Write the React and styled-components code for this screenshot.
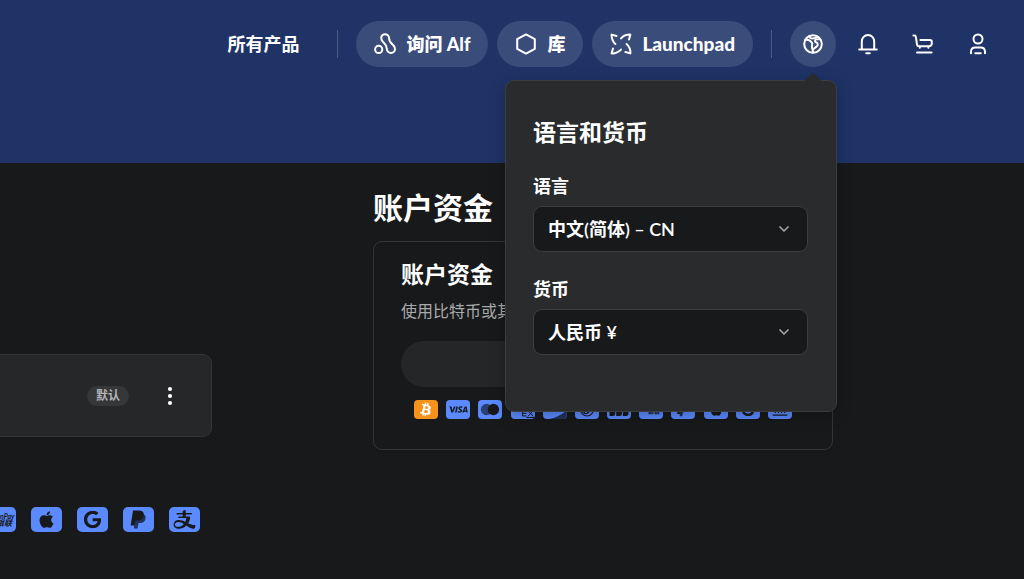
import React, { useState } from "react";
import styled, { createGlobalStyle } from "styled-components";
import { FaApple, FaBtc, FaGoogle } from "react-icons/fa";
import { AiOutlineAlipay } from "react-icons/ai";
import { SiVisa } from "react-icons/si";

const GlobalStyle = createGlobalStyle`
  * {
    box-sizing: border-box;
  }

  body {
    margin: 0;
    background-color: #18191b;
    color: #fff;
    font-family: Lato, "Noto Sans CJK SC", sans-serif;
    overflow: hidden;
  }

  button,
  select {
    font-family: inherit;
    color: inherit;
  }

  button {
    border: none;
    cursor: pointer;
  }

  h1,
  h2,
  p {
    margin: 0;
  }
`;

const Hero = styled.header`
  height: 163px;
  padding: 21px 23px 0 0;
  background-color: #1f3366;
`;

const Nav = styled.nav`
  display: flex;
  align-items: center;
  justify-content: flex-end;
`;

const NavLink = styled.a`
  color: #fff;
  font-size: 18px;
  font-weight: 700;
  line-height: 24px;
  text-decoration: none;
`;

const Divider = styled.span`
  width: 1px;
  height: 28px;
  margin: 0 18px 0 ${(props) => (props.$wide ? "38px" : "18px")};
  background-color: #4a5b85;
`;

const NavGroup = styled.div`
  display: flex;
  gap: 9px;
`;

const Pill = styled.button`
  display: flex;
  align-items: center;
  gap: 10px;
  height: 46px;
  padding: 0 18px;
  border-radius: 23px;
  background-color: #3a4c79;
  font-size: ${(props) => (props.$latin ? "19px" : "18px")};
  font-weight: 900;
  line-height: 24px;
`;

const IconButton = styled.button`
  display: flex;
  align-items: center;
  justify-content: center;
  width: 46px;
  height: 46px;
  padding: 0;
  border-radius: 50%;
  background-color: ${(props) => (props.$active ? "#3a4c79" : "transparent")};
`;

const PopoverAnchor = styled.div`
  position: relative;
`;

const Popover = styled.section`
  position: absolute;
  top: 59px;
  right: -1px;
  z-index: 2;
  width: 332px;
  padding: 34px 28px 56px 27px;
  border: 1px solid #3b3d3f;
  border-radius: 9px;
  background-color: #292b2d;
  box-shadow: 0 4px 16px rgba(0, 0, 0, 0.25);

  &::before {
    content: "";
    position: absolute;
    top: -6px;
    right: 17px;
    width: 12px;
    height: 12px;
    border-radius: 2px 0 0 0;
    background-color: #292b2d;
    transform: rotate(45deg);
  }
`;

const PopoverTitle = styled.h2`
  font-size: 23px;
  line-height: 34px;
`;

const Field = styled.div`
  margin-top: 24px;
`;

const FieldLabel = styled.label`
  display: block;
  margin-bottom: 7px;
  font-size: 18px;
  font-weight: 600;
  line-height: 26px;
`;

const SelectBox = styled.div`
  display: grid;
  align-items: center;

  > * {
    grid-area: 1 / 1;
  }

  svg {
    justify-self: end;
    margin-right: 18px;
    pointer-events: none;
  }
`;

const Select = styled.select`
  appearance: none;
  width: 100%;
  height: 46px;
  padding: 0 40px 0 14px;
  border: 1px solid #3b3d3f;
  border-radius: 9px;
  background-color: #18191b;
  font-size: 18px;
  font-weight: 600;
`;

const Main = styled.main`
  display: grid;
  grid-template-columns: minmax(0, 1fr) 460px;
  column-gap: 161px;
  padding-right: 191px;
`;

const Methods = styled.section`
  padding-top: 191px;
  overflow: hidden;
`;

const MethodCard = styled.div`
  display: flex;
  align-items: center;
  justify-content: flex-end;
  gap: 29px;
  height: 83px;
  padding-right: 29px;
  border: 1px solid #333537;
  border-left: none;
  border-radius: 0 9px 9px 0;
  background-color: #252729;
`;

const Badge = styled.span`
  padding: 0 9px;
  border-radius: 10px;
  background-color: #353739;
  color: #b4b5b6;
  font-size: 12px;
  font-weight: 600;
  line-height: 20px;
`;

const MenuButton = styled.button`
  display: flex;
  padding: 0;
  background: none;
`;

const BrandRow = styled.div`
  display: flex;
  justify-content: flex-end;
  gap: 15px;
  padding: 70px 12px 0 0;
`;

const FundsBrands = styled.div`
  display: flex;
  justify-content: space-between;
  padding: 13px 13px 0;
`;

const Tile = styled.svg`
  display: block;
  flex: none;
  width: ${(props) => (props.$small ? "24px" : "31px")};
  height: ${(props) => (props.$small ? "19px" : "25px")};
  border-radius: ${(props) => (props.$small ? "4px" : "5px")};
  background-color: ${(props) => props.$bg || "#5b8aff"};
  color: #18191b;
`;

const Funds = styled.section`
  padding-top: 22px;
`;

const FundsTitle = styled.h1`
  font-size: 30px;
  line-height: 44px;
`;

const FundsCard = styled.div`
  margin-top: 12px;
  padding: 15px 27px 30px;
  border: 1px solid #333537;
  border-radius: 9px;
`;

const CardTitle = styled.h2`
  font-size: 23px;
  line-height: 34px;
`;

const CardText = styled.p`
  margin-top: 8px;
  color: #a9aaab;
  font-size: 16px;
  line-height: 24px;
`;

const FundsButton = styled.button`
  display: block;
  width: 100%;
  height: 46px;
  margin-top: 18px;
  border-radius: 23px;
  background-color: #242628;
`;

function LineIcon({ children, size = 22 }) {
  return (
    <svg
      width={size}
      height={size}
      viewBox={`0 0 ${size} ${size}`}
      fill="none"
      stroke="currentColor"
      strokeWidth="2"
      strokeLinecap="round"
      strokeLinejoin="round"
      aria-hidden="true"
    >
      {children}
    </svg>
  );
}

const AlfIcon = () => (
  <LineIcon>
    <circle cx="4.7" cy="16.4" r="3.6" />
    <path d="M7.2 5C7.2 2.8 8.9 1.2 11 1.2C13.1 1.2 14.9 2.8 15 4.8C15.1 8 15.7 9.3 18.4 11.4C20.2 12.8 21 14.2 21 16C21 18.300 19.200 20 17 20C14.800 20 13 18.300 12.900 16C12.800 13.200 12.300 12 10 10C8 8.300 7.200 6.900 7.200 5z" />
  </LineIcon>
);

const LibraryIcon = () => (
  <LineIcon>
    <path d="M11 1.4L19.8 6.1V15.9L11 20.6L2.2 15.9V6.1z" />
  </LineIcon>
);

const LaunchpadIcon = () => (
  <LineIcon>
    <path d="M6.6 3L1.6 1.6C1.4 6 2.8 8.6 5.4 11" />
    <path d="M19 6.6L20.4 1.6C16 1.4 13.4 2.8 11 5.4" />
    <path d="M15.4 19L20.4 20.4C20.6 16 19.2 13.4 16.6 11" />
    <path d="M3 15.4L1.6 20.4C6 20.6 8.6 19.2 11 16.6" />
  </LineIcon>
);

const GlobeIcon = () => (
  <LineIcon>
    <circle cx="11" cy="11" r="8.8" />
    <path d="M3.4 6.5C6.2 6.6 8.8 7.8 10 9.7C11 11.4 9.4 12.4 10 14.4L11.2 19.4" />
    <path d="M7 3.2L8.6 5C10.4 6.4 12.6 5.3 15.6 3.8" />
    <path d="M18 6.3H14.5C12.6 6.5 12.5 8.7 14 9.3C16.4 10 16.2 12.4 14.5 13.6L11 16.4" />
  </LineIcon>
);

const BellIcon = () => (
  <LineIcon>
    <path d="M4.8 16V8.4A6.2 6.4 0 0 1 17.2 8.4V16M2.2 16.4H19.8M9.2 20.2H12.8" />
  </LineIcon>
);

const CartIcon = () => (
  <LineIcon>
    <path d="M1.4 2.5H2.5Q3.6 2.5 3.8 3.6L5 11.4Q5.3 13.3 7 13.3H16.5Q19.6 13.3 19.8 10.5V8.8Q19.8 7 18 7H8.4" />
    <path d="M5 19.6H19.6M7.8 14.4V14.8M16.4 14.4V14.8" />
  </LineIcon>
);

const UserIcon = () => (
  <LineIcon>
    <circle cx="11" cy="6" r="4.5" />
    <path d="M4 20.2V18.6Q4.2 14.4 8.2 14.4H13.8Q17.8 14.4 18 18.6V20.2M8.2 20.2H13.8" />
  </LineIcon>
);

const Chevron = () => (
  <svg width="12" height="12" viewBox="0 0 12 12" fill="none" stroke="#a9aaab" strokeWidth="1.5" aria-hidden="true">
    <path d="M1.5 3.5L6 8L10.5 3.5" />
  </svg>
);

// Every logo is drawn on a 31x25 card
const brands = {
  bitcoin: (
    <g transform="rotate(13 15.5 12.5)" color="#fff">
      <FaBtc size={18} x="6.5" y="3.5" />
    </g>
  ),
  visa: <SiVisa size={26} x="2.5" y="-0.5" />,
  mastercard: (
    <>
      <circle cx="11" cy="12.5" r="7.5" fill="#2c3f72" />
      <circle cx="20" cy="12.5" r="7.5" fill="currentColor" />
    </>
  ),
  amex: (
    <g fill="none" stroke="currentColor" strokeWidth="1.3">
      <path d="M15 9H31M20 14H15V21H20M15 17.5H20M22 14L29 21.5M29 14L22 21.5" />
      <path d="M20 23H31" />
    </g>
  ),
  discover: <path d="M31 13C25 19 17 23 8 25H31z" fill="#233257" />,
  diners: (
    <g fill="none" stroke="currentColor" strokeWidth="1.5">
      <circle cx="15.5" cy="12.5" r="8.5" />
      <circle cx="14" cy="12.5" r="5.5" />
      <path d="M12 8V17M16 8V17" />
    </g>
  ),
  jcb: (
    <g fill="currentColor">
      <path d="M3 7Q3 4 6 4H10.5V18Q10.5 21 7.5 21H3z" />
      <path d="M11.8 7Q11.800 4 14.800 4H19.300V18Q19.300 21 16.300 21H11.800z" />
      <path d="M20.600 7Q20.600 4 23.600 4H28V18Q28 21 25 21H20.600z" />
    </g>
  ),
  unionpay: (
    <g fill="currentColor" fontWeight="700" fontStyle="italic">
      <text x="1" y="12" fontSize="7">UnionPay</text>
      <text x="11" y="19" fontSize="8">银联</text>
    </g>
  ),
  apple: <FaApple size={19} x="6" y="3" />,
  google: <FaGoogle size={18} x="6.5" y="3.5" />,
  paypal: (
    <>
      <path d="M12 7H19.5Q23.5 8 22.5 12Q21.5 16 17 16H15.5L14.5 21.5H11z" fill="#233257" />
      <path d="M10 3.5H16.5Q21.5 4 20.8 8.5Q20 13.5 14.5 13.5H12.5L11.5 18.5H7.7z" fill="currentColor" />
    </>
  ),
  alipay: <AiOutlineAlipay size={25} x="3" y="0" />,
  bank: (
    <g fill="none" stroke="currentColor" strokeWidth="1.6">
      <path d="M7 9L15.5 4L24 9zM9.5 11V17M13.5 11V17M17.5 11V17M21.5 11V17M6 20H25" />
    </g>
  ),
};

function BrandTile({ name, small }) {
  return (
    <Tile viewBox="0 0 31 25" $small={small} $bg={name === "bitcoin" ? "#f7931a" : undefined} role="img" aria-label={name}>
      {brands[name]}
    </Tile>
  );
}

const fundsBrands = [
  "bitcoin",
  "visa",
  "mastercard",
  "amex",
  "discover",
  "diners",
  "jcb",
  "unionpay",
  "paypal",
  "apple",
  "google",
  "bank",
];

const methodBrands = ["unionpay", "apple", "google", "paypal", "alipay"];

function LocalePopover() {
  const [language, setLanguage] = useState("zh-CN");
  const [currency, setCurrency] = useState("CNY");

  return (
    <Popover>
      <PopoverTitle>语言和货币</PopoverTitle>
      <Field>
        <FieldLabel htmlFor="language">语言</FieldLabel>
        <SelectBox>
          <Select id="language" value={language} onChange={(e) => setLanguage(e.target.value)}>
            <option value="zh-CN">中文(简体) – CN</option>
          </Select>
          <Chevron />
        </SelectBox>
      </Field>
      <Field>
        <FieldLabel htmlFor="currency">货币</FieldLabel>
        <SelectBox>
          <Select id="currency" value={currency} onChange={(e) => setCurrency(e.target.value)}>
            <option value="CNY">人民币 ¥</option>
          </Select>
          <Chevron />
        </SelectBox>
      </Field>
    </Popover>
  );
}

function App() {
  const [isOpen, setIsOpen] = useState(true);

  return (
    <>
      <GlobalStyle />
      <Hero>
        <Nav>
          <NavLink href="#products">所有产品</NavLink>
          <Divider $wide />
          <NavGroup>
            <Pill>
              <AlfIcon />
              询问 Alf
            </Pill>
            <Pill>
              <LibraryIcon />
              库
            </Pill>
            <Pill $latin>
              <LaunchpadIcon />
              Launchpad
            </Pill>
          </NavGroup>
          <Divider />
          <NavGroup>
            <PopoverAnchor>
              <IconButton $active={isOpen} aria-label="语言和货币" onClick={() => setIsOpen(!isOpen)}>
                <GlobeIcon />
              </IconButton>
              {isOpen && <LocalePopover />}
            </PopoverAnchor>
            <IconButton aria-label="通知">
              <BellIcon />
            </IconButton>
            <IconButton aria-label="购物车">
              <CartIcon />
            </IconButton>
            <IconButton aria-label="账户">
              <UserIcon />
            </IconButton>
          </NavGroup>
        </Nav>
      </Hero>
      <Main>
        <Methods>
          <MethodCard>
            <Badge>默认</Badge>
            <MenuButton aria-label="更多">
              <svg width="24" height="24" viewBox="0 0 24 24" fill="#fff" aria-hidden="true">
                <circle cx="12" cy="5" r="2.1" />
                <circle cx="12" cy="12" r="2.1" />
                <circle cx="12" cy="19" r="2.1" />
              </svg>
            </MenuButton>
          </MethodCard>
          <BrandRow>
            {methodBrands.map((name) => (
              <BrandTile key={name} name={name} />
            ))}
          </BrandRow>
        </Methods>
        <Funds>
          <FundsTitle>账户资金</FundsTitle>
          <FundsCard>
            <CardTitle>账户资金</CardTitle>
            <CardText>使用比特币或其</CardText>
            <FundsButton aria-label="账户资金" />
            <FundsBrands>
              {fundsBrands.map((name) => (
                <BrandTile key={name} name={name} small />
              ))}
            </FundsBrands>
          </FundsCard>
        </Funds>
      </Main>
    </>
  );
}

export default App;
